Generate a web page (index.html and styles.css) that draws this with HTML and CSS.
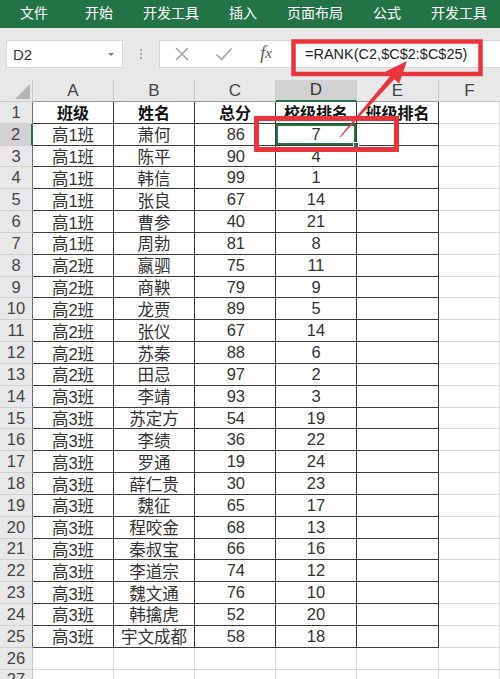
FILE: index.html
```html
<!DOCTYPE html>
<html lang="zh">
<head>
<meta charset="utf-8">
<title>RANK</title>
<link rel="stylesheet" href="styles.css">
</head>
<body>
<div class="page">
  <div class="ribbon">
    <span class="tab first">文件</span>
    <span class="tab">开始</span>
    <span class="tab">开发工具</span>
    <span class="tab">插入</span>
    <span class="tab">页面布局</span>
    <span class="tab">公式</span>
    <span class="tab">开发工具</span>
  </div>
  <div class="fbar">
    <div class="namebox"><span class="nb-text">D2</span><span class="nb-arrow"></span></div>
    <div class="dots"><span></span><span></span><span></span></div>
    <div class="fbox">
      <span class="ficon"><svg width="16" height="16" viewBox="0 0 16 16"><path d="M2 2 L14 14 M14 2 L2 14" stroke="#a6a6a6" stroke-width="1.6" fill="none"/></svg></span>
      <span class="ficon"><svg width="18" height="16" viewBox="0 0 18 16"><path d="M1.5 8.5 L6.5 13.5 L16.5 2.5" stroke="#a6a6a6" stroke-width="1.7" fill="none"/></svg></span>
      <span class="ficon fx">f<i>x</i></span>
      <span class="ftext">=RANK(C2,$C$2:$C$25)</span>
    </div>
  </div>
  <div class="sheet">
    <div class="ch corner"><span class="tri"></span></div>
    <div class="ch">A</div><div class="ch">B</div><div class="ch">C</div><div class="ch chsel">D</div><div class="ch">E</div><div class="ch last">F</div>

    <div class="rh">1</div><div class="c d hd">班级</div><div class="c d hd">姓名</div><div class="c d hd">总分</div><div class="c d hd">校级排名</div><div class="c d hd">班级排名</div><div class="c"></div>
    <div class="rh rhsel">2</div><div class="c d">高1班</div><div class="c d">萧何</div><div class="c d r">86</div><div class="c d sel">7<span class="handle"></span></div><div class="c d"></div><div class="c"></div>
    <div class="rh">3</div><div class="c d">高1班</div><div class="c d">陈平</div><div class="c d r">90</div><div class="c d">4</div><div class="c d"></div><div class="c"></div>
    <div class="rh">4</div><div class="c d">高1班</div><div class="c d">韩信</div><div class="c d r">99</div><div class="c d">1</div><div class="c d"></div><div class="c"></div>
    <div class="rh">5</div><div class="c d">高1班</div><div class="c d">张良</div><div class="c d r">67</div><div class="c d">14</div><div class="c d"></div><div class="c"></div>
    <div class="rh">6</div><div class="c d">高1班</div><div class="c d">曹参</div><div class="c d r">40</div><div class="c d">21</div><div class="c d"></div><div class="c"></div>
    <div class="rh">7</div><div class="c d">高1班</div><div class="c d">周勃</div><div class="c d r">81</div><div class="c d">8</div><div class="c d"></div><div class="c"></div>
    <div class="rh">8</div><div class="c d">高2班</div><div class="c d">嬴驷</div><div class="c d r">75</div><div class="c d">11</div><div class="c d"></div><div class="c"></div>
    <div class="rh">9</div><div class="c d">高2班</div><div class="c d">商鞅</div><div class="c d r">79</div><div class="c d">9</div><div class="c d"></div><div class="c"></div>
    <div class="rh">10</div><div class="c d">高2班</div><div class="c d">龙贾</div><div class="c d r">89</div><div class="c d">5</div><div class="c d"></div><div class="c"></div>
    <div class="rh">11</div><div class="c d">高2班</div><div class="c d">张仪</div><div class="c d r">67</div><div class="c d">14</div><div class="c d"></div><div class="c"></div>
    <div class="rh">12</div><div class="c d">高2班</div><div class="c d">苏秦</div><div class="c d r">88</div><div class="c d">6</div><div class="c d"></div><div class="c"></div>
    <div class="rh">13</div><div class="c d">高2班</div><div class="c d">田忌</div><div class="c d r">97</div><div class="c d">2</div><div class="c d"></div><div class="c"></div>
    <div class="rh">14</div><div class="c d">高3班</div><div class="c d">李靖</div><div class="c d r">93</div><div class="c d">3</div><div class="c d"></div><div class="c"></div>
    <div class="rh">15</div><div class="c d">高3班</div><div class="c d">苏定方</div><div class="c d r">54</div><div class="c d">19</div><div class="c d"></div><div class="c"></div>
    <div class="rh">16</div><div class="c d">高3班</div><div class="c d">李绩</div><div class="c d r">36</div><div class="c d">22</div><div class="c d"></div><div class="c"></div>
    <div class="rh">17</div><div class="c d">高3班</div><div class="c d">罗通</div><div class="c d r">19</div><div class="c d">24</div><div class="c d"></div><div class="c"></div>
    <div class="rh">18</div><div class="c d">高3班</div><div class="c d">薛仁贵</div><div class="c d r">30</div><div class="c d">23</div><div class="c d"></div><div class="c"></div>
    <div class="rh">19</div><div class="c d">高3班</div><div class="c d">魏征</div><div class="c d r">65</div><div class="c d">17</div><div class="c d"></div><div class="c"></div>
    <div class="rh">20</div><div class="c d">高3班</div><div class="c d">程咬金</div><div class="c d r">68</div><div class="c d">13</div><div class="c d"></div><div class="c"></div>
    <div class="rh">21</div><div class="c d">高3班</div><div class="c d">秦叔宝</div><div class="c d r">66</div><div class="c d">16</div><div class="c d"></div><div class="c"></div>
    <div class="rh">22</div><div class="c d">高3班</div><div class="c d">李道宗</div><div class="c d r">74</div><div class="c d">12</div><div class="c d"></div><div class="c"></div>
    <div class="rh">23</div><div class="c d">高3班</div><div class="c d">魏文通</div><div class="c d r">76</div><div class="c d">10</div><div class="c d"></div><div class="c"></div>
    <div class="rh">24</div><div class="c d">高3班</div><div class="c d">韩擒虎</div><div class="c d r">52</div><div class="c d">20</div><div class="c d"></div><div class="c"></div>
    <div class="rh">25</div><div class="c d">高3班</div><div class="c d">宇文成都</div><div class="c d r">58</div><div class="c d">18</div><div class="c d"></div><div class="c"></div>
    <div class="rh rhe">26</div><div class="c"></div><div class="c"></div><div class="c"></div><div class="c"></div><div class="c"></div><div class="c"></div>
    <div class="rh rhe">27</div><div class="c"></div><div class="c"></div><div class="c"></div><div class="c"></div><div class="c"></div><div class="c"></div>
  </div>
  <svg class="marks" width="500" height="679" viewBox="0 0 500 679">
    <rect x="293.5" y="41.5" width="187" height="32.5" fill="none" stroke="#e8353b" stroke-width="4.5"/>
    <rect x="256.5" y="118.5" width="140" height="31" fill="none" stroke="#e8353b" stroke-width="5"/>
    <polygon points="339.6,136.7 390.5,75.8 385.6,71.5 407,61 399.2,83.5 394.3,79.2 340.4,137.3" fill="#e8353b"/>
  </svg>
</div>
</body>
</html>
```
FILE: styles.css
```css
* { box-sizing: border-box; }
html, body { margin: 0; padding: 0; }
body {
  width: 500px;
  height: 679px;
  overflow: hidden;
  background: #ffffff;
  font-family: "Liberation Sans", "Noto Sans CJK SC", sans-serif;
}
.page { position: relative; width: 500px; height: 679px; overflow: hidden; }

.ribbon {
  height: 28px;
  background: #227346;
  display: flex;
  align-items: flex-start;
  padding-left: 20px;
  gap: 30px;
}
.tab {
  color: #ffffff;
  font-family: "Noto Sans CJK SC", sans-serif;
  font-size: 14px;
  line-height: 24px;
  height: 24px;
  white-space: nowrap;
}
.tab.first { margin-right: 7px; }

.fbar {
  height: 52px;
  background: #e8e8e8;
  display: flex;
  align-items: center;
  padding-left: 6px;
}
.namebox {
  width: 117px;
  height: 28px;
  background: #ffffff;
  border: 1px solid #d6d6d6;
  display: flex;
  align-items: center;
  justify-content: space-between;
  padding: 0 8px 0 6px;
}
.nb-text { font-size: 15px; color: #333333; }
.nb-arrow {
  width: 0; height: 0;
  border-left: 3.5px solid transparent;
  border-right: 3.5px solid transparent;
  border-top: 3.5px solid #7a7a7a;
}
.dots {
  width: 36px;
  display: flex;
  flex-direction: column;
  align-items: center;
  gap: 2px;
}
.dots span { width: 2px; height: 2px; background: #a8a8a8; }
.fbox {
  flex: 1;
  height: 28px;
  background: #ffffff;
  border: 1px solid #d6d6d6;
  border-right: none;
  display: flex;
  align-items: center;
  padding-left: 1px;
}
.ficon {
  width: 42px;
  height: 26px;
  display: flex;
  align-items: center;
  justify-content: center;
}
.fx {
  font-family: "Liberation Serif", serif;
  font-style: italic;
  font-size: 18px;
  color: #5a5a5a;
  padding-bottom: 2px;
}
.fx i { font-size: 15px; }
.ftext {
  margin-left: 18px;
  font-size: 14.5px;
  color: #222222;
  white-space: nowrap;
}

.sheet {
  display: grid;
  grid-template-columns: 33px 81px 81px 81px 81px 82px 61px;
  grid-template-rows: 22px repeat(26, 21.84px) 20px;
  font-size: 16.5px;
  color: #333333;
}
.ch {
  background: #e8e8e8;
  border-right: 1px solid #c9c9c9;
  border-bottom: 1px solid #9a9a9a;
  display: flex;
  align-items: center;
  justify-content: center;
  font-size: 17px;
  color: #444444;
}
.ch.last { border-right: none; border-bottom-color: #c9c9c9; }
.ch.chsel { background: #d2d2d2; border-bottom: 2px solid #217346; color: #333; }
.corner { position: relative; border-bottom-color: #c9c9c9; }
.tri {
  position: absolute;
  right: 2px;
  bottom: 2px;
  width: 0; height: 0;
  border-left: 15px solid transparent;
  border-bottom: 15px solid #b4b4b4;
}
.rh {
  background: #e8e8e8;
  border-right: 1px solid #6e6e6e;
  border-bottom: 1px solid #d0d0d0;
  display: flex;
  align-items: center;
  justify-content: center;
  font-size: 16.5px;
  color: #444444;
}
.rh.rhe { border-right-color: #c9c9c9; }
.rh.rhsel { background: #d2d2d2; border-right: 2px solid #217346; }
.c {
  border-right: 1px solid #dadada;
  border-bottom: 1px solid #dadada;
  display: flex;
  align-items: center;
  justify-content: center;
  padding: 0 4px;
  white-space: nowrap;
  overflow: visible;
}
.c.d { border-right-color: #3a3a3a; border-bottom-color: #3a3a3a; }
.c.r { justify-content: flex-end; padding-right: 30px; }
.c.hd { font-weight: bold; color: #111111; font-family: "Noto Sans CJK SC", sans-serif; font-size: 16px; }
.c.sel {
  position: relative;
  box-shadow: inset 0 0 0 2px #217346;
}
.handle {
  position: absolute;
  right: -3px;
  bottom: -3px;
  width: 6px;
  height: 6px;
  background: #217346;
  border: 1px solid #ffffff;
}
.marks { position: absolute; left: 0; top: 0; pointer-events: none; }
```
